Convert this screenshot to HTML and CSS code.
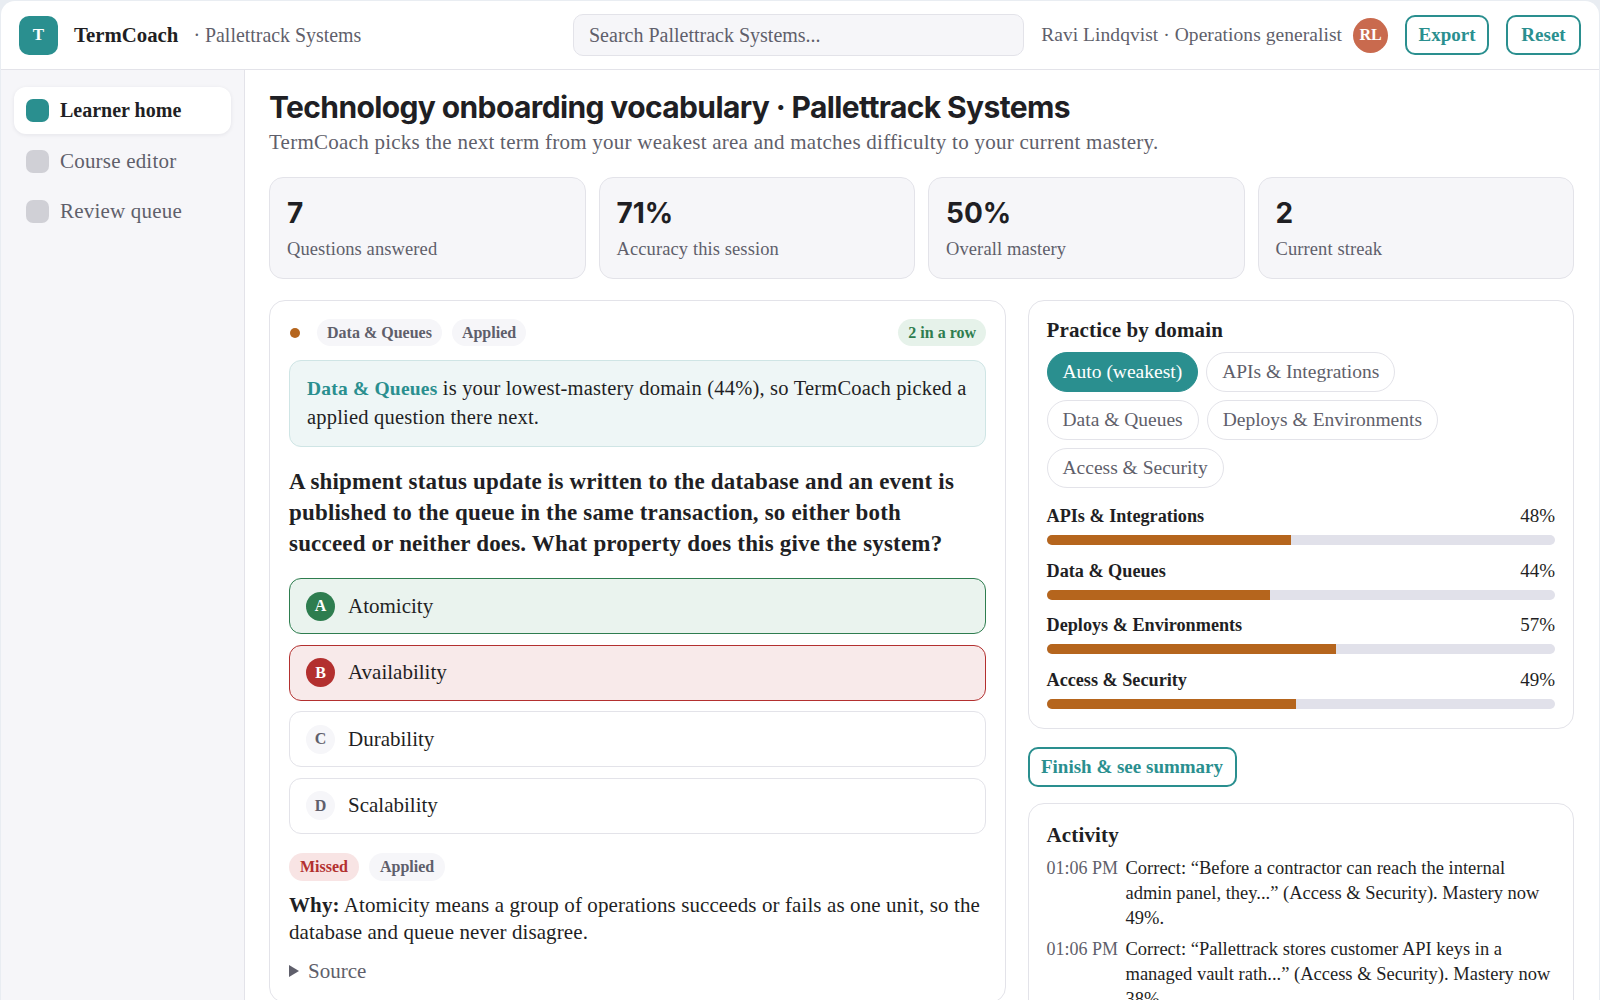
FILE: index.html
```html
<!DOCTYPE html>
<html lang="en">
<head>
  <meta charset="UTF-8" />
  <title>TermCoach · Pallettrack Systems</title>
  <link rel="stylesheet" href="styles.css">
</head>
<body>
  <div class="app">

    <!-- top bar -->
    <header class="topbar">
      <div class="topbar-left">
        <div class="logo">T</div>
        <span class="brand">TermCoach</span>
        <span class="workspace">· Pallettrack Systems</span>
      </div>
      <input class="search" type="text" placeholder="Search Pallettrack Systems..." />
      <span class="user">Ravi Lindqvist · Operations generalist</span>
      <div class="avatar">RL</div>
      <button class="btn btn-export">Export</button>
      <button class="btn btn-reset">Reset</button>
    </header>

    <div class="body">
      <!-- sidebar -->
      <nav class="sidebar">
        <a class="nav-item active"><span class="nav-icon"></span>Learner home</a>
        <a class="nav-item"><span class="nav-icon"></span>Course editor</a>
        <a class="nav-item"><span class="nav-icon"></span>Review queue</a>
      </nav>

      <main class="main">
        <h1>Technology onboarding vocabulary · Pallettrack Systems</h1>
        <p class="subtitle">TermCoach picks the next term from your weakest area and matches difficulty to your current mastery.</p>

        <div class="stats">
          <div class="stat"><div class="stat-num">7</div><div class="stat-label">Questions answered</div></div>
          <div class="stat"><div class="stat-num">71%</div><div class="stat-label">Accuracy this session</div></div>
          <div class="stat"><div class="stat-num">50%</div><div class="stat-label">Overall mastery</div></div>
          <div class="stat"><div class="stat-num">2</div><div class="stat-label">Current streak</div></div>
        </div>

        <div class="columns">
          <!-- question -->
          <section class="card question-card">
            <div class="meta-row">
              <span class="dot"></span>
              <span class="pill">Data &amp; Queues</span>
              <span class="pill">Applied</span>
              <span class="pill pill-green">2 in a row</span>
            </div>
            <div class="reason"><strong>Data &amp; Queues</strong> is your lowest-mastery domain (44%), so TermCoach picked a applied question there next.</div>
            <p class="question">A shipment status update is written to the database and an event is published to the queue in the same transaction, so either both succeed or neither does. What property does this give the system?</p>

            <div class="options">
              <div class="option correct"><span class="letter">A</span>Atomicity</div>
              <div class="option wrong"><span class="letter">B</span>Availability</div>
              <div class="option"><span class="letter">C</span>Durability</div>
              <div class="option"><span class="letter">D</span>Scalability</div>
            </div>

            <div class="result-row">
              <span class="pill pill-red">Missed</span>
              <span class="pill">Applied</span>
            </div>
            <p class="why"><strong>Why:</strong> Atomicity means a group of operations succeeds or fails as one unit, so the database and queue never disagree.</p>
            <div class="source"><span class="caret"></span>Source</div>
          </section>

          <!-- right column -->
          <div class="side">
            <section class="card domain-card">
              <h2>Practice by domain</h2>
              <div class="domain-chips">
                <span class="chip selected">Auto (weakest)</span>
                <span class="chip">APIs &amp; Integrations</span>
                <span class="chip">Data &amp; Queues</span>
                <span class="chip">Deploys &amp; Environments</span>
                <span class="chip">Access &amp; Security</span>
              </div>
              <div class="mastery">
                <div class="mastery-row"><div class="mastery-head"><span>APIs &amp; Integrations</span><span class="pct">48%</span></div><div class="bar"><div class="bar-fill" style="width:48%"></div></div></div>
                <div class="mastery-row"><div class="mastery-head"><span>Data &amp; Queues</span><span class="pct">44%</span></div><div class="bar"><div class="bar-fill" style="width:44%"></div></div></div>
                <div class="mastery-row"><div class="mastery-head"><span>Deploys &amp; Environments</span><span class="pct">57%</span></div><div class="bar"><div class="bar-fill" style="width:57%"></div></div></div>
                <div class="mastery-row"><div class="mastery-head"><span>Access &amp; Security</span><span class="pct">49%</span></div><div class="bar"><div class="bar-fill" style="width:49%"></div></div></div>
              </div>
            </section>

            <button class="btn btn-finish">Finish &amp; see summary</button>

            <section class="card activity">
              <h2>Activity</h2>
              <div class="log-row">
                <span class="log-time">01:06 PM</span>
                <span class="log-text">Correct: “Before a contractor can reach the internal admin panel, they...” (Access &amp; Security). Mastery now 49%.</span>
              </div>
              <div class="log-row">
                <span class="log-time">01:06 PM</span>
                <span class="log-text">Correct: “Pallettrack stores customer API keys in a managed vault rath...” (Access &amp; Security). Mastery now 38%.</span>
              </div>
            </section>
          </div>
        </div>
      </main>
    </div>
  </div>
</body>
</html>
```

FILE: styles.css
```css
html, body {
  height: 100%;
}
body {
  margin: 0;
  padding: 1px 1px 0;
  box-sizing: border-box;
  background: #e9edf2;
  font-family: "Liberation Serif", serif;
  color: #1f1f24;
  overflow: hidden;
}
.app {
  height: 999px;
  background: #fff;
  border-radius: 14px 14px 0 0;
  overflow: hidden;
}

/* top bar */
.topbar {
  display: flex;
  align-items: center;
  height: 68px;
  padding: 0 18px;
  border-bottom: 1px solid #e3e3e9;
  white-space: nowrap;
}
.topbar-left {
  display: flex;
  align-items: center;
  width: 554px;
  flex-shrink: 0;
}
.logo {
  width: 39px;
  height: 39px;
  margin-right: 16px;
  border-radius: 10px;
  background: #2a8f8f;
  color: #fff;
  font-size: 17px;
  font-weight: 700;
  display: flex;
  align-items: center;
  justify-content: center;
}
.brand {
  font-size: 20.8px;
  font-weight: 700;
  margin-right: 15px;
}
.workspace {
  font-size: 19.9px;
  color: #5f5f6b;
}
.search {
  width: 451px;
  height: 42px;
  box-sizing: border-box;
  padding: 0 15px;
  border: 1px solid #e3e3e9;
  border-radius: 10px;
  background: #f6f6f9;
  font-family: inherit;
  font-size: 20px;
}
.search::placeholder {
  color: #5f5f6b;
  opacity: 1;
}
.user {
  margin-left: auto;
  font-size: 19.5px;
  letter-spacing: 0.05px;
  color: #5f5f6b;
}
.avatar {
  width: 35px;
  height: 35px;
  margin-left: 11px;
  border-radius: 50%;
  background: #c96a4e;
  color: #fff;
  font-size: 16px;
  font-weight: 700;
  display: flex;
  align-items: center;
  justify-content: center;
}
.btn {
  height: 40px;
  padding: 0;
  border: 2px solid #2a8f8f;
  border-radius: 10px;
  background: #fff;
  color: #2a8f8f;
  font-family: inherit;
  font-size: 19px;
  font-weight: 700;
}
.btn-export {
  margin-left: 17px;
  width: 84px;
}
.btn-reset {
  margin-left: 17px;
  width: 75px;
}

.body {
  display: flex;
  height: 930px;
}

/* sidebar */
.sidebar {
  width: 244px;
  flex-shrink: 0;
  box-sizing: border-box;
  padding: 17px 13px;
  background: #f6f6f9;
  border-right: 1px solid #e3e3e9;
  display: flex;
  flex-direction: column;
  gap: 3.5px;
}
.nav-item {
  display: flex;
  align-items: center;
  gap: 11px;
  height: 47px;
  padding: 0 12px;
  border-radius: 12px;
  font-size: 21px;
  letter-spacing: 0.2px;
  color: #5f5f6b;
}
.nav-item.active {
  background: #fff;
  box-shadow: 0 1px 4px rgba(30, 30, 50, 0.08);
  color: #1f1f24;
  font-size: 20px;
  letter-spacing: 0;
  font-weight: 700;
}
.nav-icon {
  width: 23px;
  height: 23px;
  border-radius: 7px;
  background: #d0d0d6;
}
.active .nav-icon {
  background: #2a8f8f;
}

/* main */
.main {
  flex: 1;
  min-width: 0;
  padding: 18px 25px 0 24px;
}
h1 {
  margin: 0;
  font-family: Inter, sans-serif;
  font-size: 30px;
  line-height: 38px;
  font-weight: 700;
  letter-spacing: -0.62px;
}
.subtitle {
  margin: 1px 0 0;
  font-size: 21px;
  line-height: 30px;
  letter-spacing: 0.25px;
  color: #5f5f6b;
}
.stats {
  display: grid;
  grid-template-columns: repeat(4, 1fr);
  gap: 13px;
  margin-top: 20px;
}
.stat {
  height: 102px;
  box-sizing: border-box;
  padding: 18px 17px 0;
  background: #f6f6f9;
  border: 1px solid #e3e3e9;
  border-radius: 14px;
}
.stat-num {
  font-family: Inter, sans-serif;
  font-size: 28px;
  line-height: 34px;
  font-weight: 700;
}
.stat-label {
  margin-top: 6px;
  font-size: 18.5px;
  line-height: 26px;
  letter-spacing: 0.1px;
  color: #5f5f6b;
}

.columns {
  display: grid;
  grid-template-columns: 737px 1fr;
  gap: 21.5px;
  margin-top: 21px;
  align-items: start;
}
.card {
  box-sizing: border-box;
  padding: 18px 19px;
  background: #fff;
  border: 1px solid #e3e3e9;
  border-radius: 16px;
}

/* question card */
.meta-row {
  display: flex;
  align-items: center;
  gap: 10px;
}
.dot {
  width: 10px;
  height: 10px;
  margin: 0 7px 0 1px;
  border-radius: 50%;
  background: #b5651d;
}
.pill {
  display: inline-block;
  height: 27px;
  padding: 0 10px;
  border-radius: 14px;
  background: #f6f6f9;
  color: #5f5f6b;
  font-size: 16px;
  font-weight: 700;
  line-height: 27px;
}
.pill-green {
  margin-left: auto;
  background: #e6f2ea;
  color: #2e7d4f;
}
.pill-red {
  background: #f8e4e4;
  color: #b3302f;
}
.reason {
  margin-top: 14px;
  padding: 13px 17px 15px;
  background: #eef6f6;
  border: 1px solid #cfe5e5;
  border-radius: 12px;
  font-size: 20.5px;
  line-height: 28px;
  letter-spacing: 0.2px;
}
.reason strong {
  font-size: 19.5px;
  color: #2a8f8f;
}
.question {
  max-width: 685px;
  margin: 19px 0 0;
  font-size: 23px;
  line-height: 31px;
  letter-spacing: 0.18px;
  font-weight: 700;
}
.options {
  display: flex;
  flex-direction: column;
  gap: 10.5px;
  margin-top: 19px;
}
.option {
  display: flex;
  align-items: center;
  gap: 13px;
  height: 56px;
  box-sizing: border-box;
  padding: 0 16px;
  border: 1px solid #e3e3e9;
  border-radius: 12px;
  font-size: 21px;
}
.letter {
  width: 29px;
  height: 29px;
  border-radius: 50%;
  background: #f6f6f9;
  color: #5f5f6b;
  font-size: 16px;
  font-weight: 700;
  display: flex;
  align-items: center;
  justify-content: center;
}
.correct {
  background: #eaf3ee;
  border-color: #2e7d4f;
}
.correct .letter {
  background: #2e7d4f;
  color: #fff;
}
.wrong {
  background: #f8eaea;
  border-color: #b3302f;
}
.wrong .letter {
  background: #b3302f;
  color: #fff;
}
.result-row {
  display: flex;
  gap: 10px;
  margin-top: 19px;
}
.result-row .pill {
  height: 28px;
  padding: 0 11px;
  line-height: 28px;
}
.why {
  margin: 11px 0 0;
  font-size: 21px;
  line-height: 27px;
  letter-spacing: 0.1px;
}
.source {
  display: flex;
  align-items: center;
  margin-top: 13px;
  font-size: 21px;
  color: #5f5f6b;
}
.caret {
  width: 0;
  height: 0;
  margin-right: 9px;
  border-left: 10px solid #5f5f6b;
  border-top: 6px solid transparent;
  border-bottom: 6px solid transparent;
}

/* right column */
.side {
  display: flex;
  flex-direction: column;
  align-items: flex-start;
  gap: 16px;
}
.side .card {
  width: 100%;
  padding: 16px 18px 19px;
}
h2 {
  margin: 0;
  font-size: 21px;
  line-height: 26px;
  letter-spacing: 0.15px;
  font-weight: 700;
}
.domain-chips {
  display: flex;
  flex-wrap: wrap;
  gap: 8px;
  margin-top: 9px;
}
.chip {
  height: 40px;
  box-sizing: border-box;
  padding: 0 15px;
  border: 1px solid #e3e3e9;
  border-radius: 20px;
  font-size: 19.5px;
  line-height: 38px;
  color: #5f5f6b;
}
.chip.selected {
  background: #2a8f8f;
  border-color: #2a8f8f;
  color: #fff;
}
.mastery {
  margin-top: 15px;
  display: flex;
  flex-direction: column;
  gap: 12.7px;
}
.mastery-head {
  display: flex;
  justify-content: space-between;
  font-size: 18.2px;
  font-weight: 700;
  line-height: 26px;
}
.mastery-head .pct {
  font-size: 19px;
  font-weight: 400;
}
.bar {
  height: 10px;
  margin-top: 6px;
  border-radius: 5px;
  background: #e1e1ea;
  overflow: hidden;
}
.bar-fill {
  height: 100%;
  background: #b5651d;
}
.btn-finish {
  width: 209px;
  margin-top: 2px;
}
.side .activity {
  padding-top: 18px;
}
.activity h2 {
  margin-bottom: 8px;
}
.log-row {
  display: flex;
  gap: 10px;
  font-size: 18.5px;
  line-height: 25px;
  margin-bottom: 6px;
}
.log-time {
  flex-shrink: 0;
  width: 69px;
  font-size: 18px;
  color: #5f5f6b;
  white-space: nowrap;
}
```
